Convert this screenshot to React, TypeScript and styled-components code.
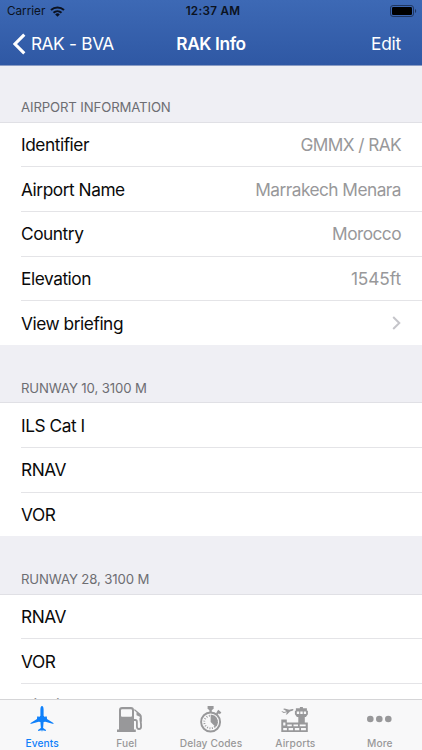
import React from "react";
import styled, { createGlobalStyle } from "styled-components";

const GlobalStyle = createGlobalStyle`
  * { box-sizing: border-box; }
  html, body { margin: 0; padding: 0; }
  body { font-family: Inter, "Liberation Sans", sans-serif; overflow: hidden; }
`;

const Screen = styled.div`
  position: relative;
  display: flex;
  flex-direction: column;
  width: 422px;
  height: 750px;
  overflow: hidden;
  background: #fff;
`;

const TopArea = styled.header`
  flex: none;
  height: 66px;
  background: linear-gradient(#3d69b5, #2f58a4);
  border-bottom: 1px solid #8a9cc4;
`;

const StatusBar = styled.div`
  display: grid;
  grid-template-columns: 1fr auto 1fr;
  align-items: center;
  height: 22px;
  padding: 0 5px 0 7px;
  color: #0b1220;
  font-size: 11.7px;
`;

const Carrier = styled.div`
  display: flex;
  align-items: center;
  gap: 5px;
  letter-spacing: 0;
`;

const Clock = styled.div`
  font-weight: 600;
  letter-spacing: 0.3px;
  padding-left: 2px;
`;

const BatterySlot = styled.div`
  display: flex;
  justify-content: flex-end;
`;

const NavBar = styled.nav`
  display: grid;
  grid-template-columns: 1fr auto 1fr;
  align-items: center;
  height: 43px;
  padding: 0 21px 0 13px;
  color: #fff;
  font-size: 17.3px;
`;

const NavBack = styled.div`
  display: flex;
  align-items: center;
  gap: 5px;
  letter-spacing: -0.5px;
  word-spacing: 0.5px;
`;

const NavTitle = styled.div`
  font-weight: 600;
  letter-spacing: -0.4px;
  padding-left: 8px;
`;

const NavAction = styled.div`
  text-align: right;
  letter-spacing: -0.2px;
`;

const List = styled.main`
  flex: none;
`;

const SectionHeader = styled.h2<{ $height: number }>`
  display: flex;
  align-items: flex-end;
  height: ${(p) => p.$height}px;
  margin: 0;
  padding: 0 21px 6.5px;
  background: #efeff4;
  border-bottom: 1px solid #e0e0e5;
  color: #6d6d72;
  font-size: 13.2px;
  line-height: 16px;
  font-weight: 400;
  letter-spacing: -0.13px;
`;

const RowInner = styled.div`
  flex: 1;
  display: flex;
  align-items: center;
  justify-content: space-between;
  padding-right: 21px;
  border-bottom: 1px solid #e4e4e7;
  font-size: 17.3px;
  letter-spacing: -0.45px;
`;

const Row = styled.div`
  display: flex;
  height: 44.7px;
  padding-left: 21px;
  &:last-child { height: 43.7px; }
  &:last-child > ${RowInner} { border-bottom: 0; }
`;

const Label = styled.span`
  color: #0a0a0a;
`;

const Value = styled.span<{ $spacing: number }>`
  color: #98989a;
  letter-spacing: ${(p) => p.$spacing}px;
`;

const TabBar = styled.footer`
  position: absolute;
  left: 0;
  right: 0;
  bottom: 0;
  height: 51px;
  display: grid;
  grid-template-columns: repeat(5, 1fr);
  background: #f8f8f9;
  border-top: 1px solid #d5d5d7;
`;

const Tab = styled.div<{ $active?: boolean }>`
  display: flex;
  flex-direction: column;
  align-items: center;
  color: ${(p) => (p.$active ? "#0f80fa" : "#98989a")};
  svg { display: block; margin-top: 4px; overflow: visible; }
`;

const TabLabel = styled.span`
  margin-top: 1px;
  font-size: 10.2px;
  line-height: 14px;
  font-weight: 500;
  letter-spacing: 0.1px;
`;

const WifiIcon = () => (
  <svg width="15" height="11" viewBox="0 0 15 11">
    <g fill="none" stroke="#0b1220" strokeWidth="2">
      <path d="M1 4.1a9.5 9.5 0 0 1 13 0" />
      <path d="M3.5 6.7a5.9 5.9 0 0 1 8 0" />
    </g>
    <path d="M5.2 8.4a3.4 3.4 0 0 1 4.6 0L7.5 10.8z" fill="#0b1220" />
  </svg>
);

const BatteryIcon = () => (
  <svg width="27" height="12" viewBox="0 0 27 12">
    <rect x="0.5" y="0.5" width="23" height="11" rx="2.6" fill="none" stroke="#20365f" />
    <rect x="2" y="2" width="20" height="8" rx="1.3" fill="#000" />
    <path d="M25 4v4c1.6-.6 1.6-3.4 0-4z" fill="#20365f" />
  </svg>
);

const BackIcon = () => (
  <svg width="13" height="22" viewBox="0 0 13 22">
    <path d="M11.3 1.6 2 11l9.3 9.4" fill="none" stroke="#fff" strokeWidth="3.1" />
  </svg>
);

const Disclosure = () => (
  <svg width="9" height="14" viewBox="0 0 9 14">
    <path d="M1.2 1 7.3 7l-6.1 6" fill="none" stroke="#c5c5ca" strokeWidth="2" />
  </svg>
);

const PlaneIcon = () => (
  <svg width="28" height="31" viewBox="0 0 28 31">
    <path
      fill="currentColor"
      d="M14 2c1.100 0 1.600 1.800 1.600 3.500v6.300l1.500 1.500q.1-1 .9-1t.9 1l.1 1.800 6 3.700q.7.500.5 1.300l-8.200-2.300-1.700.1-.5 6 2.600 1.900q.4.400.2 1.200l-3.400-.8-.5 1.800-.5-1.800-3.400.8q-.2-.8.2-1.200l2.600-1.900-.5-6-1.700-.1-8.200 2.300q-.2-.8.5-1.300l6-3.700.1-1.800q.1-1 .9-1t.9 1l1.500-1.500V5.500C12.400 3.800 12.900 2 14 2z"
    />
  </svg>
);

const FuelIcon = () => (
  <svg width="28" height="31" viewBox="-3 0 28 31">
    <path
      fill="currentColor"
      fillRule="evenodd"
      d="M6 3h9a3 3 0 0 1 3 3v19.400h1.800V28H1v-2.600h2V6a3 3 0 0 1 3-3zm0 2.200q-1 0-1 1v5.600q0 1 1 1h9q1 0 1-1V6.200q0-1-1-1z"
    />
    <path
      d="M18 16h1.300q1.600 0 1.600 1.800v4.700q0 2.500 2.100 2.500t2.100-2.500q0-2.500-.4-4.500t-.2-4"
      fill="none"
      stroke="currentColor"
      strokeWidth="1.800"
    />
    <path d="m18.600 5 6 4.900q1.200 1 1.200 2.600v5.500l-2-1.500v-3.700l-3.300-1.500V8.200l-2.400-2z" fill="currentColor" />
  </svg>
);

const StopwatchIcon = () => (
  <svg width="28" height="31" viewBox="0.4 0 28 31">
    <path d="M11 2h6v2.400l-1.700 1.800h-2.600L11 4.400z" fill="currentColor" />
    <path d="M14 5v4M20 10l2-2M21 6.700l3 2.700" stroke="currentColor" strokeWidth="2.300" fill="none" />
    <circle cx="14" cy="18" r="9.500" fill="none" stroke="currentColor" strokeWidth="1.900" />
    <circle cx="14" cy="18" r="6.300" fill="none" stroke="currentColor" strokeWidth="1.900" strokeDasharray=".9 1.570" />
    <path d="M14 18v-7.200a7.200 7.200 0 0 1 5.100 12.300z" fill="currentColor" />
  </svg>
);

const AirportIcon = () => (
  <svg width="28" height="31" viewBox="0.7 0 28 31">
    <g fill="currentColor">
      <path d="m1 7.500 1-.3 1.800.8 2.500-.7L2.700 5.100 4.300 4.600l4.600 1.200L12 5q1.300-.1 1.200.8-.1.600-1.100.9L9.700 7.400 7 10.300l-1.500.4 1.200-2.500-3.300.9z" />
      <path
        fillRule="evenodd"
        d="M19.600 3h3v1.200h4v2.600h1v3.400l-2 2.800H16.600l-2-2.800V6.800h1V4.200h4zM16.500 7.600v2.500h2.400V7.600zm3.500 0v2.500h2.400V7.600zm3.500 0v2.500h2.300V7.600z"
      />
      <path
        fillRule="evenodd"
        d="M18 12.500h6.500v6h3V28H1V15.500h5.500v3H18zM2.900 18.500v3h2.200v-3zm0 5.500v2.300H6.600V24zM7 20.400v1.900h4.500v-1.900zm6.200 0v1.900h4.500v-1.900zm6.200 0v1.900h6v-1.900zM8.300 24v2.300h4.500V24zm6.200 0v2.300H19V24zm6.200 0v2.300h4.900V24z"
      />
    </g>
  </svg>
);

const MoreIcon = () => (
  <svg width="28" height="31" viewBox="0.7 0.4 28 31">
    <g fill="currentColor">
      <circle cx="5" cy="15.400" r="3.300" />
      <circle cx="14" cy="15.400" r="3.300" />
      <circle cx="23" cy="15.400" r="3.300" />
    </g>
  </svg>
);

type Item = { label: string; value?: string; spacing?: number; link?: boolean };
type Section = { title: string; height: number; items: Item[] };

const sections: Section[] = [
  {
    title: "AIRPORT INFORMATION",
    height: 56.5,
    items: [
      { label: "Identifier", value: "GMMX / RAK", spacing: -0.6 },
      { label: "Airport Name", value: "Marrakech Menara" },
      { label: "Country", value: "Morocco" },
      { label: "Elevation", value: "1545ft", spacing: -0.1 },
      { label: "View briefing", link: true },
    ],
  },
  {
    title: "RUNWAY 10, 3100 M",
    height: 58.3,
    items: [{ label: "ILS Cat I" }, { label: "RNAV" }, { label: "VOR" }],
  },
  {
    title: "RUNWAY 28, 3100 M",
    height: 58.3,
    items: [{ label: "RNAV" }, { label: "VOR" }, { label: "Circling" }],
  },
];

const tabs = [
  { label: "Events", Icon: PlaneIcon, active: true },
  { label: "Fuel", Icon: FuelIcon },
  { label: "Delay Codes", Icon: StopwatchIcon },
  { label: "Airports", Icon: AirportIcon },
  { label: "More", Icon: MoreIcon },
];

export default function App() {
  return (
    <>
      <GlobalStyle />
      <Screen>
        <TopArea>
          <StatusBar>
            <Carrier>
              Carrier <WifiIcon />
            </Carrier>
            <Clock>12:37 AM</Clock>
            <BatterySlot>
              <BatteryIcon />
            </BatterySlot>
          </StatusBar>
          <NavBar>
            <NavBack>
              <BackIcon /> RAK - BVA
            </NavBack>
            <NavTitle>RAK Info</NavTitle>
            <NavAction>Edit</NavAction>
          </NavBar>
        </TopArea>
        <List>
          {sections.map((s) => (
            <section key={s.title}>
              <SectionHeader $height={s.height}>{s.title}</SectionHeader>
              {s.items.map((it) => (
                <Row key={it.label}>
                  <RowInner>
                    <Label>{it.label}</Label>
                    {it.value && <Value $spacing={it.spacing ?? -0.53}>{it.value}</Value>}
                    {it.link && <Disclosure />}
                  </RowInner>
                </Row>
              ))}
            </section>
          ))}
        </List>
        <TabBar>
          {tabs.map(({ label, Icon, active }) => (
            <Tab key={label} $active={active}>
              <Icon />
              <TabLabel>{label}</TabLabel>
            </Tab>
          ))}
        </TabBar>
      </Screen>
    </>
  );
}
